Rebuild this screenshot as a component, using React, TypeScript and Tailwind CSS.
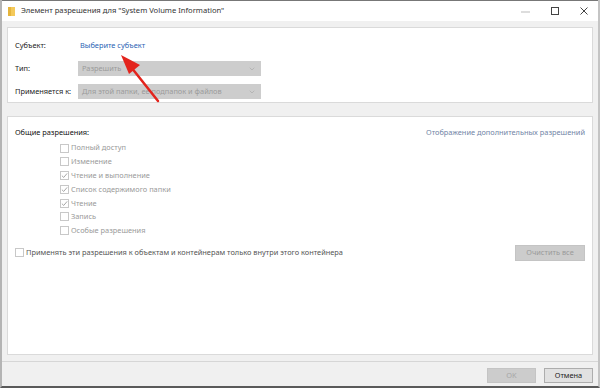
import { ChevronDown } from "lucide-react";

const perms = [
  { label: "Полный доступ", checked: false },
  { label: "Изменение", checked: false },
  { label: "Чтение и выполнение", checked: true },
  { label: "Список содержимого папки", checked: true },
  { label: "Чтение", checked: true },
  { label: "Запись", checked: false },
  { label: "Особые разрешения", checked: false },
];

const Box = ({ checked }: { checked: boolean }) => (
  <span className="w-[9px] h-[9px] border border-[#c8c8c8] bg-white flex items-center justify-center shrink-0">
    {checked && (
      <svg width="7" height="7" viewBox="0 0 8 8">
        <path d="M1 4.2 L3.1 6.2 L7 1.6" fill="none" stroke="#9a9a9a" strokeWidth="1" />
      </svg>
    )}
  </span>
);

const Select = ({ text }: { text: string }) => (
  <div className="w-[183px] h-[15px] bg-[#cdcdcd] flex items-center justify-between pl-[4px] pr-[5px] text-[#9b9b9b]">
    <span>{text}</span>
    <ChevronDown className="w-[8px] h-[8px] text-[#a9a9a9]" strokeWidth={2} />
  </div>
);

const App = () => {
  return (
    <div
      className="relative w-[600px] h-[388px] bg-[#f0f0f0] border-l-2 border-r-2 border-b-2 border-l-[#b4b4b4] border-r-[#c4c4c4] border-b-[#5a5a5a] flex flex-col text-[7.4px] text-[#222] overflow-hidden"
      style={{ fontFamily: '"Noto Sans", sans-serif' }}
    >
      {/* title bar */}
      <div className="h-[21px] bg-white border-t border-[#777] flex items-center shrink-0">
        <svg className="ml-[6px]" width="7" height="9" viewBox="0 0 7 9">
          <rect x="0" y="0" width="7" height="9" fill="#f4c95a" />
          <rect x="0" y="0" width="3" height="9" fill="#e5b43c" />
        </svg>
        <span className="ml-[6px] text-[7.6px] text-[#333]">Элемент разрешения для "System Volume Information"</span>
        <div className="ml-auto flex items-center gap-[21px] pr-[10px]">
          <svg width="9" height="9" viewBox="0 0 9 9"><path d="M0 5 H9" stroke="#bbb" strokeWidth="1" /></svg>
          <svg width="8" height="8" viewBox="0 0 8 8"><rect x="0.5" y="0.5" width="7" height="7" fill="none" stroke="#444" strokeWidth="1" /></svg>
          <svg width="8" height="8" viewBox="0 0 8 8"><path d="M0.5 0.5 L7.5 7.5 M7.5 0.5 L0.5 7.5" stroke="#444" strokeWidth="1" /></svg>
        </div>
      </div>

      <div className="px-[5px] pt-[6px] shrink-0">
        {/* subject panel */}
        <div className="h-[76px] bg-white border border-[#dadada] px-[7px] pt-[10px] flex flex-col gap-[8px]">
          <div className="flex items-center h-[15px]">
            <span className="w-[63px]">Субъект:</span>
            <span className="ml-[2px] text-[#2a64b4]">Выберите субъект</span>
          </div>
          <div className="flex items-center">
            <span className="w-[63px]">Тип:</span>
            <Select text="Разрешить" />
          </div>
          <div className="flex items-center">
            <span className="w-[63px]">Применяется к:</span>
            <Select text="Для этой папки, ее подпапок и файлов" />
          </div>
        </div>

        {/* permissions panel */}
        <div className="mt-[13px] h-[239px] bg-white border border-[#dadada] px-[7px] pt-[10px] flex flex-col">
          <div className="flex justify-between">
            <span className="text-[#111]">Общие разрешения:</span>
            <span className="text-[#7285a6]">Отображение дополнительных разрешений</span>
          </div>
          <div className="ml-[45px] mt-[3px] flex flex-col">
            {perms.map((p) => (
              <div key={p.label} className="flex items-center gap-[2px] h-[13.8px] text-[#9a9a9a]">
                <Box checked={p.checked} />
                <span>{p.label}</span>
              </div>
            ))}
          </div>
          <div className="mt-[7px] flex items-center justify-between">
            <div className="flex items-center gap-[2px] text-[#555]">
              <Box checked={false} />
              <span>Применять эти разрешения к объектам и контейнерам только внутри этого контейнера</span>
            </div>
            <div className="w-[70px] h-[16px] bg-[#cccccc] border border-[#c4c4c4] flex items-center justify-center text-[#9a9a9a]">
              Очистить все
            </div>
          </div>
        </div>
      </div>

      {/* footer */}
      <div className="mt-[6px] border-t border-[#d6d6d6] flex-1 flex justify-end items-start pt-[6px] pr-[5px] gap-[8px]">
        <div className="w-[49px] h-[15px] bg-[#cccccc] border border-[#c4c4c4] flex items-center justify-center text-[#a6a6a6]">OK</div>
        <div className="w-[49px] h-[15px] bg-[#e1e1e1] border border-[#adadad] flex items-center justify-center text-[#222]">Отмена</div>
      </div>

      {/* red annotation arrow */}
      <svg className="absolute left-0 top-0 pointer-events-none" width="600" height="388">
        <line x1="156" y1="101" x2="129" y2="67" stroke="#e3241d" strokeWidth="2.5" strokeLinecap="round" />
        <polygon points="119,55 138,65 127,74" fill="#e3241d" />
      </svg>
    </div>
  );
};

export default App;
